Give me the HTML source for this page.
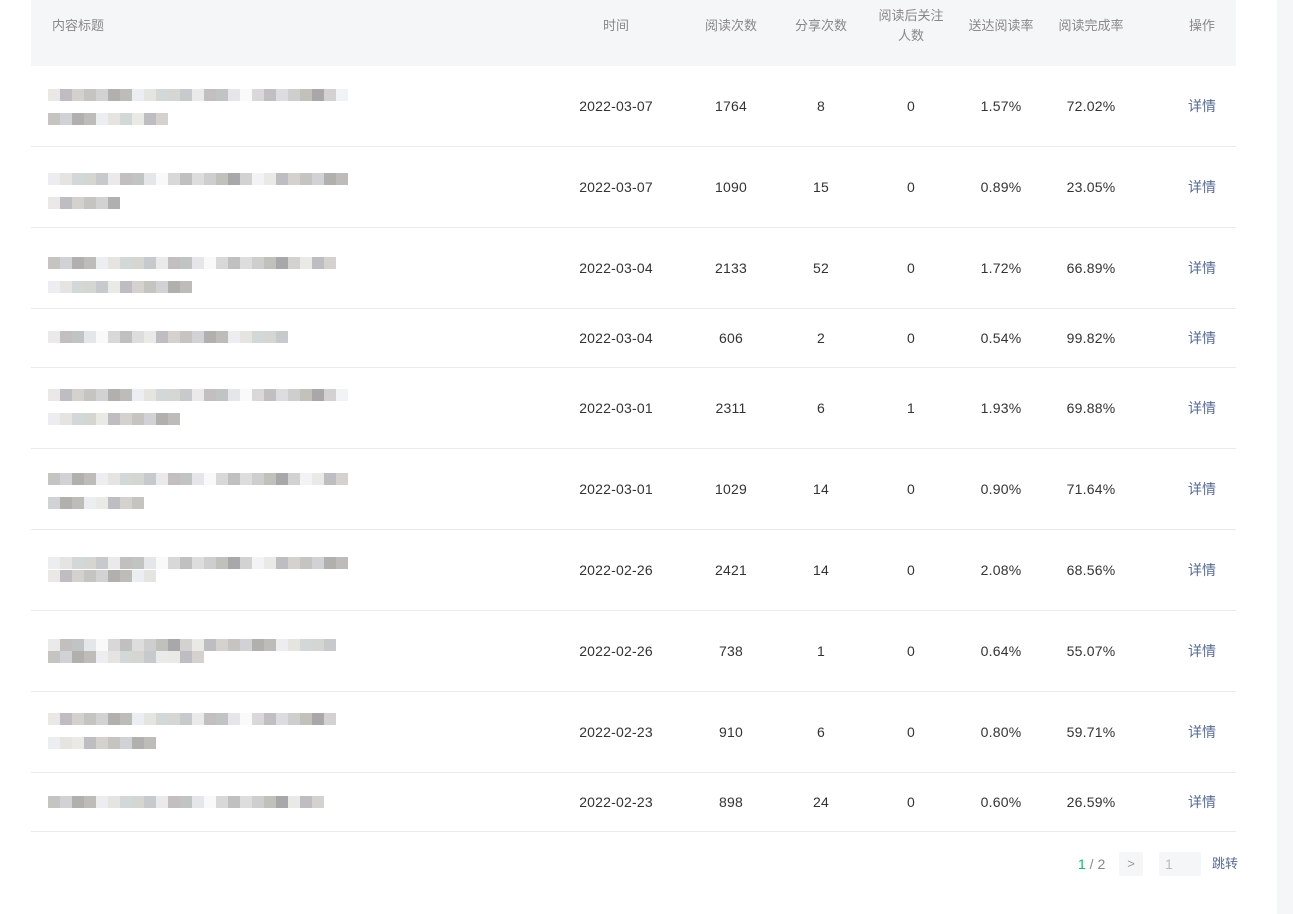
<!DOCTYPE html>
<html><head><meta charset="utf-8"><style>
body{margin:0;width:1293px;height:914px;background:#fff;position:relative;overflow:hidden;font-family:"Liberation Sans","Noto Sans CJK SC",sans-serif}
.sb{position:absolute;left:1277px;top:0;width:16px;height:914px;background:#f5f6f8}
.hd{position:absolute;left:31px;top:0;width:1205px;height:66px;background:#f5f6f8}
.h{position:absolute;font-size:13px;color:#888;line-height:20px;text-align:center;transform:translateX(-50%);white-space:nowrap}
.line{position:absolute;left:31px;width:1205px;height:1px;background:#ebebeb}
.c{position:absolute;font-size:14px;color:#333;transform:translate(-50%,-50%);white-space:nowrap;letter-spacing:0.2px}
.a{color:#576b95;letter-spacing:0}
.px{position:absolute;left:48px;height:12px;opacity:.8;
background:linear-gradient(90deg,#e4e3e0 0 12px,#aeadb2 12px 24px,#c9c5c2 24px 36px,#b6b5b0 36px 48px,#c6c7ca 48px 60px,#9d9c9a 60px 72px,#acaba7 72px 84px,#e6e9ee 84px 96px,#deddd8 96px 108px,#c7cdcd 108px 120px,#cbcbc7 120px 132px,#b8bdbf 132px 144px,#e5e5e5 144px 156px,#b4afaf 156px 168px,#b0b6b5 168px 180px,#dfe0e4 180px 192px,#f8f8f8 192px 204px,#d0cece 204px 216px,#b0b0b2 216px 228px,#d4d4d6 228px 240px,#c2c2c2 240px 252px,#b2b2aa 252px 264px,#929295 264px 276px,#c8c7c5 276px 288px,#edf0f3 288px 300px)}
.p2{background-position:-36px 0}
.p3{background-position:-84px 0}
.p4{background-position:-144px 0}
</style></head><body>
<div class="sb"></div>
<div class="hd"></div>
<div class="h" style="left:52px;top:16px;transform:none">内容标题</div>
<div class="h" style="left:616px;top:16px">时间</div>
<div class="h" style="left:731px;top:16px">阅读次数</div>
<div class="h" style="left:821px;top:16px">分享次数</div>
<div class="h" style="left:911px;top:6px">阅读后关注<br>人数</div>
<div class="h" style="left:1001px;top:16px">送达阅读率</div>
<div class="h" style="left:1091px;top:16px">阅读完成率</div>
<div class="h" style="left:1202px;top:16px">操作</div>

<div class="px" style="top:89px;width:300px"></div><div class="px p2" style="top:113px;width:120px"></div>
<div class="line" style="top:146px"></div>
<div class="px p3" style="top:173px;width:300px"></div><div class="px p4" style="top:197px;width:72px"></div>
<div class="line" style="top:227px"></div>
<div class="px p2" style="top:257px;width:288px"></div><div class="px p3" style="top:281px;width:144px"></div>
<div class="line" style="top:308px"></div>
<div class="px p4" style="top:331px;width:240px"></div>
<div class="line" style="top:367px"></div>
<div class="px" style="top:389px;width:300px"></div><div class="px p3" style="top:413px;width:132px"></div>
<div class="line" style="top:448px"></div>
<div class="px p2" style="top:473px;width:300px"></div><div class="px p4" style="top:497px;width:96px"></div>
<div class="line" style="top:529px"></div>
<div class="px p3" style="top:557px;width:300px"></div><div class="px" style="top:570px;width:108px"></div>
<div class="line" style="top:610px"></div>
<div class="px p4" style="top:639px;width:288px"></div><div class="px p2" style="top:651px;width:156px"></div>
<div class="line" style="top:691px"></div>
<div class="px" style="top:713px;width:288px"></div><div class="px p3" style="top:737px;width:108px"></div>
<div class="line" style="top:772px"></div>
<div class="px p2" style="top:796px;width:276px"></div>
<div class="line" style="top:831px"></div>

<div class="c" style="left:616px;top:106px">2022-03-07</div><div class="c" style="left:731px;top:106px">1764</div><div class="c" style="left:821px;top:106px">8</div><div class="c" style="left:911px;top:106px">0</div><div class="c" style="left:1001px;top:106px">1.57%</div><div class="c" style="left:1091px;top:106px">72.02%</div><div class="c a" style="left:1202px;top:106px">详情</div>
<div class="c" style="left:616px;top:187px">2022-03-07</div><div class="c" style="left:731px;top:187px">1090</div><div class="c" style="left:821px;top:187px">15</div><div class="c" style="left:911px;top:187px">0</div><div class="c" style="left:1001px;top:187px">0.89%</div><div class="c" style="left:1091px;top:187px">23.05%</div><div class="c a" style="left:1202px;top:187px">详情</div>
<div class="c" style="left:616px;top:268px">2022-03-04</div><div class="c" style="left:731px;top:268px">2133</div><div class="c" style="left:821px;top:268px">52</div><div class="c" style="left:911px;top:268px">0</div><div class="c" style="left:1001px;top:268px">1.72%</div><div class="c" style="left:1091px;top:268px">66.89%</div><div class="c a" style="left:1202px;top:268px">详情</div>
<div class="c" style="left:616px;top:338px">2022-03-04</div><div class="c" style="left:731px;top:338px">606</div><div class="c" style="left:821px;top:338px">2</div><div class="c" style="left:911px;top:338px">0</div><div class="c" style="left:1001px;top:338px">0.54%</div><div class="c" style="left:1091px;top:338px">99.82%</div><div class="c a" style="left:1202px;top:338px">详情</div>
<div class="c" style="left:616px;top:408px">2022-03-01</div><div class="c" style="left:731px;top:408px">2311</div><div class="c" style="left:821px;top:408px">6</div><div class="c" style="left:911px;top:408px">1</div><div class="c" style="left:1001px;top:408px">1.93%</div><div class="c" style="left:1091px;top:408px">69.88%</div><div class="c a" style="left:1202px;top:408px">详情</div>
<div class="c" style="left:616px;top:489px">2022-03-01</div><div class="c" style="left:731px;top:489px">1029</div><div class="c" style="left:821px;top:489px">14</div><div class="c" style="left:911px;top:489px">0</div><div class="c" style="left:1001px;top:489px">0.90%</div><div class="c" style="left:1091px;top:489px">71.64%</div><div class="c a" style="left:1202px;top:489px">详情</div>
<div class="c" style="left:616px;top:570px">2022-02-26</div><div class="c" style="left:731px;top:570px">2421</div><div class="c" style="left:821px;top:570px">14</div><div class="c" style="left:911px;top:570px">0</div><div class="c" style="left:1001px;top:570px">2.08%</div><div class="c" style="left:1091px;top:570px">68.56%</div><div class="c a" style="left:1202px;top:570px">详情</div>
<div class="c" style="left:616px;top:651px">2022-02-26</div><div class="c" style="left:731px;top:651px">738</div><div class="c" style="left:821px;top:651px">1</div><div class="c" style="left:911px;top:651px">0</div><div class="c" style="left:1001px;top:651px">0.64%</div><div class="c" style="left:1091px;top:651px">55.07%</div><div class="c a" style="left:1202px;top:651px">详情</div>
<div class="c" style="left:616px;top:732px">2022-02-23</div><div class="c" style="left:731px;top:732px">910</div><div class="c" style="left:821px;top:732px">6</div><div class="c" style="left:911px;top:732px">0</div><div class="c" style="left:1001px;top:732px">0.80%</div><div class="c" style="left:1091px;top:732px">59.71%</div><div class="c a" style="left:1202px;top:732px">详情</div>
<div class="c" style="left:616px;top:802px">2022-02-23</div><div class="c" style="left:731px;top:802px">898</div><div class="c" style="left:821px;top:802px">24</div><div class="c" style="left:911px;top:802px">0</div><div class="c" style="left:1001px;top:802px">0.60%</div><div class="c" style="left:1091px;top:802px">26.59%</div><div class="c a" style="left:1202px;top:802px">详情</div>

<div style="position:absolute;left:1078px;top:855px;font-size:14px;color:#888;line-height:18px"><span style="color:#07c160">1</span> / 2</div>
<div style="position:absolute;left:1119px;top:852px;width:24px;height:24px;background:#f5f6f8;border-radius:2px;color:#999;font-size:13px;line-height:24px;text-align:center">&gt;</div>
<div style="position:absolute;left:1159px;top:852px;width:42px;height:24px;background:#f5f6f8;border-radius:2px;color:#bbb;font-size:14px;line-height:24px;padding-left:6px;box-sizing:border-box">1</div>
<div style="position:absolute;left:1212px;top:855px;font-size:13px;color:#576b95;line-height:18px">跳转</div>
</body></html>
